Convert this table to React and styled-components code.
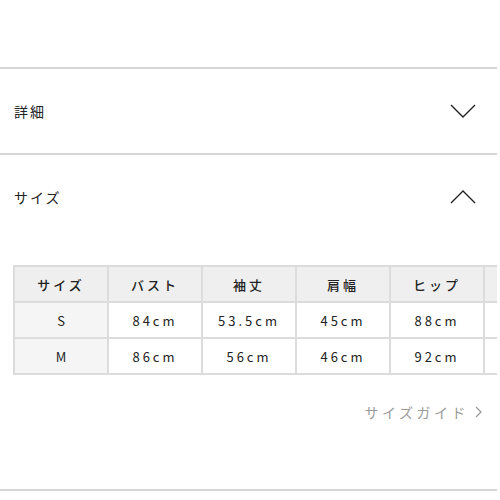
import React from "react";
import styled, { createGlobalStyle } from "styled-components";

let GlobalStyle = createGlobalStyle`
    body{
        margin:0;
        background:#fff;
        font-family:"Noto Sans CJK JP","Noto Sans",sans-serif;
        color:#222;
    }
`
let Page = styled.div`
    width:497px;
    padding-top:67px;
    overflow:hidden;
`
let Section = styled.div`
    border-top:2px solid #d6d6d6;
    &.last{
        border-bottom:2px solid #d6d6d6;
    }
`
let SectionHeader = styled.div`
    height:84px;
    display:flex;
    justify-content:space-between;
    align-items:center;
    padding:0 21px 0 14px;
    font-size:14px;
    letter-spacing:2px;
    svg{
        display:block;
    }
`
let SectionBody = styled.div`
    padding:26px 0 67px 13px;
    display:flex;
    flex-direction:column;
`
let TableWrap = styled.div`
    overflow:hidden;
    width:484px;
`
let SizeTable = styled.table`
    border-collapse:collapse;
    table-layout:fixed;
    width:max-content;
    th,td{
        width:92px;
        height:34px;
        border:2px solid #dcdcdc;
        text-align:center;
        font-size:13px;
        letter-spacing:3px;
        padding:0;
        color:#222;
    }
    th{
        background:#efefef;
        font-weight:500;
    }
    td.label{
        background:#f5f5f5;
        letter-spacing:0;
    }
`
let GuideLink = styled.div`
    align-self:flex-end;
    margin-top:27px;
    margin-right:14px;
    font-size:14px;
    letter-spacing:3.5px;
    color:#9a9a9a;
    display:flex;
    align-items:center;
    gap:6px;
`

let Chevron = ({up}) => (
    <svg width="26" height="16" viewBox="0 0 26 16">
        <polyline points={up ? "1,14 13,2 25,14" : "1,2 13,14 25,2"} fill="none" stroke="#222" strokeWidth="1.4" />
    </svg>
)

export default function App(){
    let heads = ['サイズ','バスト','袖丈','肩幅','ヒップ','']
    let rows = [
        ['S','84cm','53.5cm','45cm','88cm',''],
        ['M','86cm','56cm','46cm','92cm',''],
    ]
    return(
        <Page>
            <GlobalStyle />
            <Section>
                <SectionHeader>
                    <span>詳細</span>
                    <Chevron />
                </SectionHeader>
            </Section>
            <Section className="last">
                <SectionHeader>
                    <span>サイズ</span>
                    <Chevron up />
                </SectionHeader>
                <SectionBody>
                    <TableWrap>
                        <SizeTable>
                            <thead>
                                <tr>{heads.map((h, i) => <th key={i}>{h}</th>)}</tr>
                            </thead>
                            <tbody>
                                {rows.map(r => (
                                    <tr key={r[0]}>
                                        {r.map((c, i) => <td key={i} className={i === 0 ? 'label' : ''}>{c}</td>)}
                                    </tr>
                                ))}
                            </tbody>
                        </SizeTable>
                    </TableWrap>
                    <GuideLink>
                        サイズガイド
                        <svg width="8" height="12" viewBox="0 0 8 12">
                            <polyline points="1,1 6,6 1,11" fill="none" stroke="#9a9a9a" strokeWidth="1.3" />
                        </svg>
                    </GuideLink>
                </SectionBody>
            </Section>
        </Page>
    )
}
